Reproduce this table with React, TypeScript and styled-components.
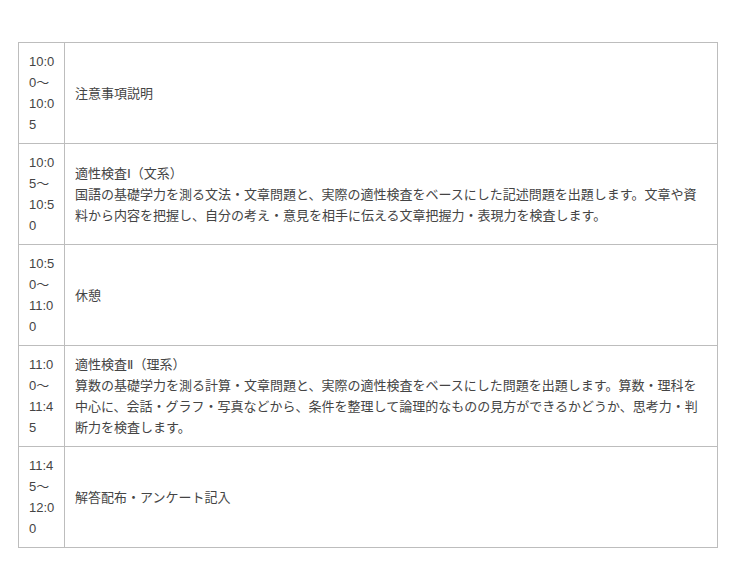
import styled, { createGlobalStyle } from "styled-components";

const GlobalStyle = createGlobalStyle`
  body {
    margin: 0;
    background: #fff;
    font-family: "Liberation Sans", "DejaVu Sans", "Noto Sans CJK JP", sans-serif;
    color: #444;
  }
`;

const Page = styled.div`
  padding: 42px 22px 0 18px;
`;

const Schedule = styled.table`
  width: 700px;
  border-collapse: collapse;
  font-size: 13px;
  line-height: 21px;
`;

const TimeCell = styled.td`
  width: 26px;
  padding: 8px 9px 8px 10px;
  border: 1px solid #bdbdbd;
  vertical-align: middle;
  word-break: break-all;
`;

const BodyCell = styled.td`
  padding: 8px 10px;
  border: 1px solid #bdbdbd;
  vertical-align: middle;
`;

type Item = { time: string; title: string; detail?: string };

const items: Item[] = [
  { time: "10:00〜10:05", title: "注意事項説明" },
  {
    time: "10:05〜10:50",
    title: "適性検査Ⅰ（文系）",
    detail:
      "国語の基礎学力を測る文法・文章問題と、実際の適性検査をベースにした記述問題を出題します。文章や資料から内容を把握し、自分の考え・意見を相手に伝える文章把握力・表現力を検査します。",
  },
  { time: "10:50〜11:00", title: "休憩" },
  {
    time: "11:00〜11:45",
    title: "適性検査Ⅱ（理系）",
    detail:
      "算数の基礎学力を測る計算・文章問題と、実際の適性検査をベースにした問題を出題します。算数・理科を中心に、会話・グラフ・写真などから、条件を整理して論理的なものの見方ができるかどうか、思考力・判断力を検査します。",
  },
  { time: "11:45〜12:00", title: "解答配布・アンケート記入" },
];

export default function App() {
  return (
    <>
      <GlobalStyle />
      <Page>
        <Schedule>
          <tbody>
            {items.map((item) => (
              <tr key={item.time}>
                <TimeCell>{item.time}</TimeCell>
                <BodyCell>
                  {item.title}
                  {item.detail && (
                    <>
                      <br />
                      {item.detail}
                    </>
                  )}
                </BodyCell>
              </tr>
            ))}
          </tbody>
        </Schedule>
      </Page>
    </>
  );
}
